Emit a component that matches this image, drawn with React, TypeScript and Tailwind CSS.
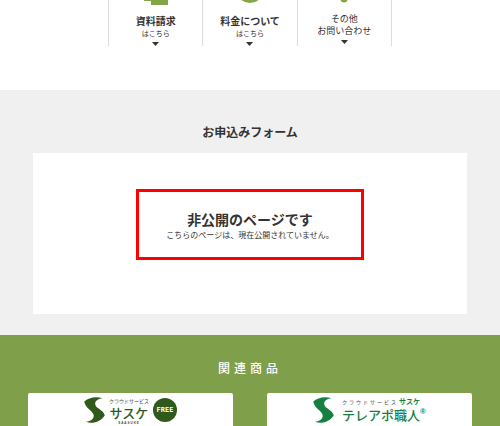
function Arrow() {
  return (
    <svg viewBox="0 0 7 4" className="w-[7px] h-1 shrink-0" fill="#333" aria-hidden="true">
      <path d="M0 0h7L3.5 4z" />
    </svg>
  );
}

function SasukeMark({ color }: { color: string }) {
  return (
    <svg viewBox="0 0 21 26" className="w-[21px] h-[26px] shrink-0" fill={color} aria-hidden="true">
      <path d="M.2 4.800C4 .6 12 -1 18.500 1.300C12 2 9.800 6 12 9.200C14 12 18.500 12.500 20.800 18.200C17 24.500 9 27.300 2 24.800C8 24 11.200 20.500 9 16.500C7 13 2 11.500 .2 4.800z" />
    </svg>
  );
}

export default function App() {
  return (
    <div
      lang="ja"
      className="min-h-screen flex flex-col bg-white text-[#333] font-['Noto_Sans_CJK_JP',sans-serif]"
    >
      {/* Contact menu */}
      <nav className="w-full px-[108px] pb-11">
        <div className="grid grid-cols-3 h-[46px] border-l border-[#ddd]">
          <a href="#request" className="flex flex-col items-center border-r border-[#ddd]">
            <svg viewBox="0 0 24 5" className="w-6 h-[5px]" fill="#82a545" aria-hidden="true">
              <path d="M0 0h24v5H7V1H0z" />
            </svg>
            <span className="mt-2 text-[10px] leading-[15px] font-bold whitespace-nowrap">資料請求</span>
            <span className="text-[7px] leading-[10px]">はこちら</span>
            <span className="mt-1"><Arrow /></span>
          </a>
          <a href="#price" className="flex flex-col items-center border-r border-[#ddd]">
            <svg viewBox="0 0 24 5" className="w-6 h-[5px]" fill="#82a545" aria-hidden="true">
              <circle cx="12" cy="-11" r="14" />
            </svg>
            <span className="mt-2 text-[10px] leading-[15px] font-bold whitespace-nowrap">料金について</span>
            <span className="text-[7px] leading-[10px]">はこちら</span>
            <span className="mt-1"><Arrow /></span>
          </a>
          <a href="#contact" className="flex flex-col items-center border-r border-[#ddd]">
            <svg viewBox="0 0 24 5" className="w-6 h-[5px]" fill="#82a545" aria-hidden="true">
              <circle cx="12" cy="-1" r="3.500" />
            </svg>
            <span className="mt-2 text-[9px] leading-3 text-center whitespace-nowrap">
              その他
              <br />
              お問い合わせ
            </span>
            <span className="mt-[3px]"><Arrow /></span>
          </a>
        </div>
      </nav>

      {/* Form */}
      <section className="bg-[#f0f0f0] px-[33px] pt-8 pb-[21px]">
        <h2 className="text-center text-[12px] leading-5 font-bold">お申込みフォーム</h2>
        <div className="mt-[11px] bg-white px-[103px] pt-9 pb-[54px]">
          <div className="border-3 border-[#ff0000] pt-[17px] pb-4 text-center whitespace-nowrap">
            <h3 className="text-[14px] leading-5 font-bold">非公開のページです</h3>
            <p className="text-[8px] leading-3">こちらのページは、現在公開されていません。</p>
          </div>
        </div>
      </section>

      {/* Related products */}
      <section className="grow bg-[#809f4b] px-7 pt-6">
        <h2 className="text-center text-[12px] leading-[18px] font-medium tracking-[4px] text-white">
          関連商品
        </h2>
        <div className="mt-4 grid grid-cols-2 gap-[34px]">
          <a
            href="#sasuke-free"
            className="flex items-start justify-center h-[33px] rounded-t-xs bg-white pt-1 text-[#2f5a1b]"
          >
            <SasukeMark color="#2f5a1b" />
            <span className="ml-1 flex flex-col items-center whitespace-nowrap">
              <span className="text-[5px] leading-[7px] text-[#444]">クラウドサービス</span>
              <span className="text-[13px] leading-[17px] font-medium">サスケ</span>
              <span className="font-['Liberation_Sans',sans-serif] text-[3px] leading-1 font-bold tracking-[1px] text-[#444]">
                SAASUKE
              </span>
            </span>
            <span className="ml-1 flex items-center justify-center size-6 mt-[1px] rounded-full bg-[#2f5a1b] font-['DejaVu_Sans_Mono',monospace] text-[7px] leading-none font-bold text-white">
              FREE
            </span>
          </a>
          <a
            href="#tele-apo"
            className="flex items-start justify-center h-[33px] rounded-t-xs bg-white pt-1 text-[#15803f]"
          >
            <SasukeMark color="#15803f" />
            <span className="ml-2 flex flex-col items-start whitespace-nowrap">
              <span className="flex items-center gap-[1px] h-[9px]">
                <span className="text-[5px] tracking-[2px] text-[#444]">クラウドサービス</span>
                <span className="text-[7px] font-bold">サスケ</span>
              </span>
              <span className="flex items-start text-[13px] leading-[18px] font-medium">
                テレアポ職人
                <span className="font-['Liberation_Sans',sans-serif] text-[8px] leading-3 font-bold">®</span>
              </span>
            </span>
          </a>
        </div>
      </section>
    </div>
  );
}
